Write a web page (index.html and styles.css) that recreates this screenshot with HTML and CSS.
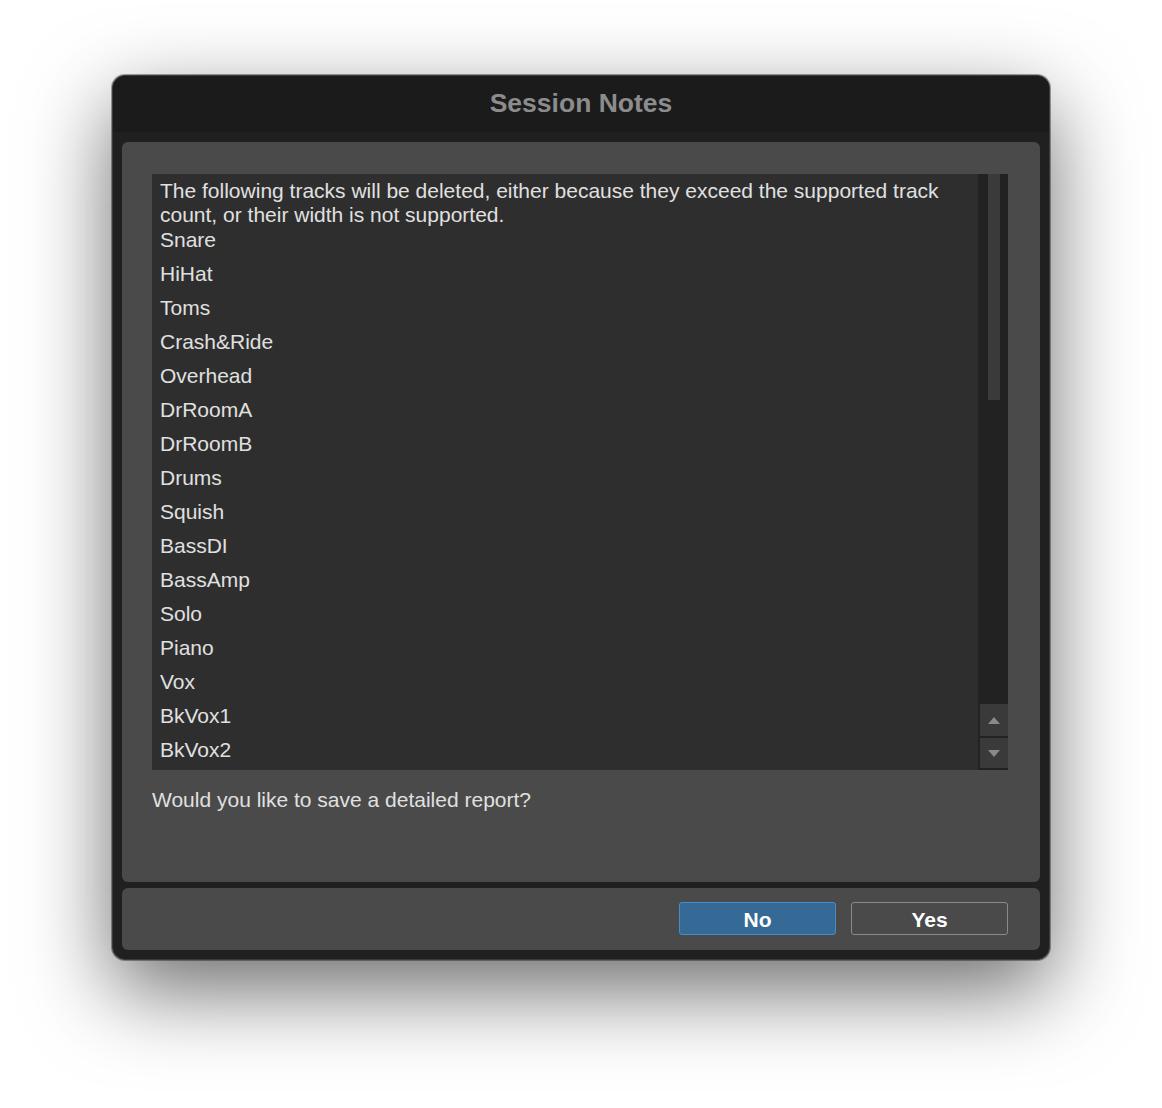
FILE: index.html
```html
<!DOCTYPE html>
<html>
<head>
  <meta charset="UTF-8">
  <title>Session Notes</title>
  <link rel="stylesheet" href="styles.css">
</head>
<body>
  <div class="dialog">
    <div class="titlebar">
      <h1>Session Notes</h1>
    </div>

    <div class="dialog-body">
      <div class="panel main-panel">
        <div class="list">
          <div class="list-content">
            <p class="intro">The following tracks will be deleted, either because they exceed the supported track count, or their width is not supported.</p>
            <ul class="tracks">
              <li>Snare</li>
              <li>HiHat</li>
              <li>Toms</li>
              <li>Crash&amp;Ride</li>
              <li>Overhead</li>
              <li>DrRoomA</li>
              <li>DrRoomB</li>
              <li>Drums</li>
              <li>Squish</li>
              <li>BassDI</li>
              <li>BassAmp</li>
              <li>Solo</li>
              <li>Piano</li>
              <li>Vox</li>
              <li>BkVox1</li>
              <li>BkVox2</li>
            </ul>
          </div>
          <div class="scrollbar">
            <div class="track">
              <div class="thumb"></div>
            </div>
            <div class="scroll-btn up"><span class="arrow-up"></span></div>
            <div class="scroll-btn down"><span class="arrow-down"></span></div>
          </div>
        </div>

        <p class="question">Would you like to save a detailed report?</p>
      </div>

      <div class="panel button-panel">
        <button class="btn btn-primary">No</button>
        <button class="btn">Yes</button>
      </div>
    </div>
  </div>
</body>
</html>
```

FILE: styles.css
```css
* {
  margin: 0;
  padding: 0;
  box-sizing: border-box;
}

body {
  font-family: 'Liberation Sans', Arial, sans-serif;
  background: #ffffff;
  padding: 75px 0 0 112px;
  min-height: 100vh;
}

.dialog {
  width: 938px;
  height: 885px;
  background: #202020;
  border: 1px solid #3a3a3a;
  border-radius: 13px;
  box-shadow: 0 30px 85px rgba(0,0,0,0.58), 0 0 0 1px rgba(0,0,0,0.35);
  display: flex;
  flex-direction: column;
  overflow: hidden;
}

.titlebar {
  height: 56px;
  background: #1b1b1b;
  display: flex;
  align-items: center;
  justify-content: center;
  flex-shrink: 0;
}

.titlebar h1 {
  color: #8c8c8c;
  font-size: 26.5px;
  font-weight: 700;
  margin-top: -1px;
}

.dialog-body {
  flex: 1;
  padding: 10px 9px 9px;
  display: flex;
  flex-direction: column;
  gap: 6px;
}

.panel {
  background: #4a4a4a;
  border-radius: 6px;
}

.main-panel {
  height: 740px;
  padding: 32px 32px 0 30px;
}

.list {
  height: 596px;
  background: #2e2e2e;
  display: flex;
  overflow: hidden;
}

.list-content {
  flex: 1;
  padding: 4px 20px 0 8px;
  color: #e0e0e0;
  font-size: 21px;
  line-height: 24px;
}

.intro {
  padding-top: 1px;
  margin-bottom: -1px;
}

.tracks {
  list-style: none;
}

.tracks li {
  height: 34px;
  padding-top: 2px;
}

.scrollbar {
  width: 30px;
  background: #222222;
  display: flex;
  flex-direction: column;
  padding-bottom: 2px;
}

.track {
  flex: 1;
  padding-left: 10px;
}

.thumb {
  width: 12px;
  height: 226px;
  background: #3a3a3a;
}

.scroll-btn {
  margin-left: 2px;
  background: #3a3a3a;
  display: flex;
  align-items: center;
  justify-content: center;
}

.scroll-btn.up {
  height: 32px;
  margin-bottom: 2px;
}

.scroll-btn.down {
  height: 30px;
}

.arrow-up {
  width: 0;
  height: 0;
  border-left: 6px solid transparent;
  border-right: 6px solid transparent;
  border-bottom: 7px solid #8a8a8a;
}

.arrow-down {
  width: 0;
  height: 0;
  border-left: 6px solid transparent;
  border-right: 6px solid transparent;
  border-top: 7px solid #8a8a8a;
}

.question {
  margin-top: 18px;
  color: #e0e0e0;
  font-size: 21px;
  line-height: 24px;
}

.button-panel {
  height: 62px;
  padding: 14px 32px 0 0;
  display: flex;
  justify-content: flex-end;
  align-items: flex-start;
  gap: 15px;
}

.btn {
  width: 157px;
  height: 33px;
  padding-top: 2px;
  border: 1px solid #8a8a8a;
  border-radius: 3px;
  background: transparent;
  color: #ffffff;
  font-family: 'Liberation Sans', Arial, sans-serif;
  font-size: 21px;
  font-weight: 700;
  cursor: pointer;
}

.btn-primary {
  background: #356a96;
  border-color: #4a8cc6;
}
```
